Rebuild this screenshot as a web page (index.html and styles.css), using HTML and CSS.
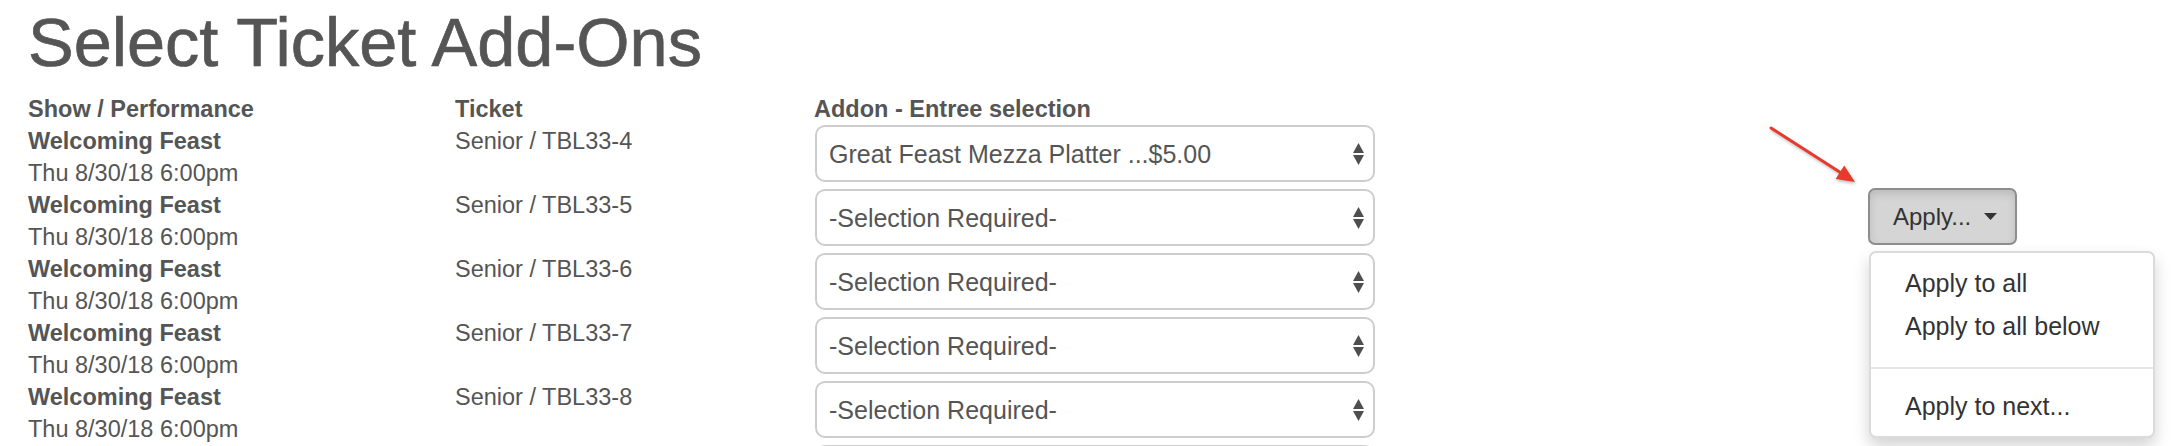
FILE: index.html
```html
<!DOCTYPE html>
<html lang="en">
<head>
<meta charset="utf-8">
<title>Select Ticket Add-Ons</title>
<link rel="stylesheet" href="styles.css">
</head>
<body>
<main class="page">
  <h1 class="title">Select Ticket Add-Ons</h1>
  <div class="sheet">
    <div class="row head">
      <div>Show / Performance</div>
      <div>Ticket</div>
      <div>Addon - Entree selection</div>
      <div></div>
    </div>

    <div class="row data">
      <div><div class="show">Welcoming Feast</div><div>Thu 8/30/18 6:00pm</div></div>
      <div>Senior / TBL33-4</div>
      <div class="select"><span class="select-text">Great Feast Mezza Platter ...$5.00</span><svg class="updown" width="11" height="22" viewBox="0 0 11 22"><polygon points="0,10 5.5,0 11,10"/><polygon points="0,12 11,12 5.5,22"/></svg></div>
      <div></div>
    </div>

    <div class="row data">
      <div><div class="show">Welcoming Feast</div><div>Thu 8/30/18 6:00pm</div></div>
      <div>Senior / TBL33-5</div>
      <div class="select"><span class="select-text">-Selection Required-</span><svg class="updown" width="11" height="22" viewBox="0 0 11 22"><polygon points="0,10 5.5,0 11,10"/><polygon points="0,12 11,12 5.5,22"/></svg></div>
      <div class="apply">
        <div class="btn"><span>Apply...</span><svg class="caret" width="13" height="7" viewBox="0 0 13 7"><polygon points="0,0 13,0 6.5,7"/></svg></div>
        <div class="menu">
          <div class="menu-item">Apply to all</div>
          <div class="menu-item">Apply to all below</div>
          <div class="menu-divider"></div>
          <div class="menu-item">Apply to next...</div>
        </div>
      </div>
    </div>

    <div class="row data">
      <div><div class="show">Welcoming Feast</div><div>Thu 8/30/18 6:00pm</div></div>
      <div>Senior / TBL33-6</div>
      <div class="select"><span class="select-text">-Selection Required-</span><svg class="updown" width="11" height="22" viewBox="0 0 11 22"><polygon points="0,10 5.5,0 11,10"/><polygon points="0,12 11,12 5.5,22"/></svg></div>
      <div></div>
    </div>

    <div class="row data">
      <div><div class="show">Welcoming Feast</div><div>Thu 8/30/18 6:00pm</div></div>
      <div>Senior / TBL33-7</div>
      <div class="select"><span class="select-text">-Selection Required-</span><svg class="updown" width="11" height="22" viewBox="0 0 11 22"><polygon points="0,10 5.5,0 11,10"/><polygon points="0,12 11,12 5.5,22"/></svg></div>
      <div></div>
    </div>

    <div class="row data">
      <div><div class="show">Welcoming Feast</div><div>Thu 8/30/18 6:00pm</div></div>
      <div>Senior / TBL33-8</div>
      <div class="select"><span class="select-text">-Selection Required-</span><svg class="updown" width="11" height="22" viewBox="0 0 11 22"><polygon points="0,10 5.5,0 11,10"/><polygon points="0,12 11,12 5.5,22"/></svg></div>
      <div></div>
    </div>

    <div class="row data">
      <div></div>
      <div></div>
      <div class="select"></div>
      <div></div>
    </div>
  </div>
</main>

<svg class="arrow" width="110" height="75" viewBox="0 0 110 75">
  <line x1="11" y1="10" x2="80" y2="54.3" class="arrow-line"/>
  <polygon points="95,64 75.6,61 84.2,47.6" class="arrow-head"/>
</svg>
</body>
</html>
```

FILE: styles.css
```css
html, body {
  margin: 0;
  padding: 0;
  overflow: hidden;
  background: #ffffff;
}

body {
  position: relative;
  font-family: "Liberation Sans", Arial, Helvetica, sans-serif;
  color: #555555;
}

.page {
  padding: 3px 0 0 28px;
}

.title {
  margin: 0 0 10px;
  font-size: 68.5px;
  line-height: 80px;
  font-weight: normal;
  color: #555555;
  -webkit-text-stroke: 0.7px #555555;
}

.sheet {
  font-size: 23.5px;
  line-height: 32px;
}

.row {
  display: grid;
  grid-template-columns: 427px 359px 561px 1fr;
}

.row.head {
  height: 32px;
  font-weight: bold;
}

.row.data {
  height: 64px;
}

.show {
  font-weight: bold;
}

.select {
  display: flex;
  align-items: center;
  justify-content: space-between;
  box-sizing: border-box;
  height: 57px;
  margin-left: 1px;
  padding: 0 9px 0 12px;
  border: 2px solid #cdcdcd;
  border-radius: 10px;
  background: #ffffff;
  font-size: 25px;
  line-height: 32px;
  color: #555555;
}

.updown {
  fill: #4f4f4f;
  flex: none;
}

.apply {
  position: relative;
  align-self: start;
  margin: -1px 0 0 493px;
}

.btn {
  display: inline-flex;
  align-items: center;
  gap: 13px;
  box-sizing: border-box;
  height: 57px;
  padding: 0 18px 0 23px;
  border: 2px solid #8d8d8d;
  border-radius: 7px;
  background: #d5d5d5;
  box-shadow: inset 0 4px 8px rgba(0, 0, 0, 0.12);
  font-size: 24px;
  line-height: 32px;
  color: #333333;
}

.caret {
  fill: #333333;
  flex: none;
}

.menu {
  position: absolute;
  top: 63px;
  left: 1px;
  box-sizing: border-box;
  width: 286px;
  padding: 9px 0 8px;
  border: 2px solid rgba(0, 0, 0, 0.14);
  border-radius: 7px;
  background: #ffffff;
  box-shadow: 0 8px 16px rgba(0, 0, 0, 0.18);
  font-size: 25px;
  line-height: 43px;
  color: #333333;
}

.menu-item {
  padding-left: 34px;
  white-space: nowrap;
}

.menu-divider {
  height: 2px;
  margin: 19px 0 16px;
  background: #e5e5e5;
}

.arrow {
  position: absolute;
  left: 1760px;
  top: 118px;
  filter: drop-shadow(1px 2px 1.5px rgba(0, 0, 0, 0.25));
}

.arrow-line {
  stroke: #e8392d;
  stroke-width: 3;
  stroke-linecap: round;
}

.arrow-head {
  fill: #e8392d;
}
```
